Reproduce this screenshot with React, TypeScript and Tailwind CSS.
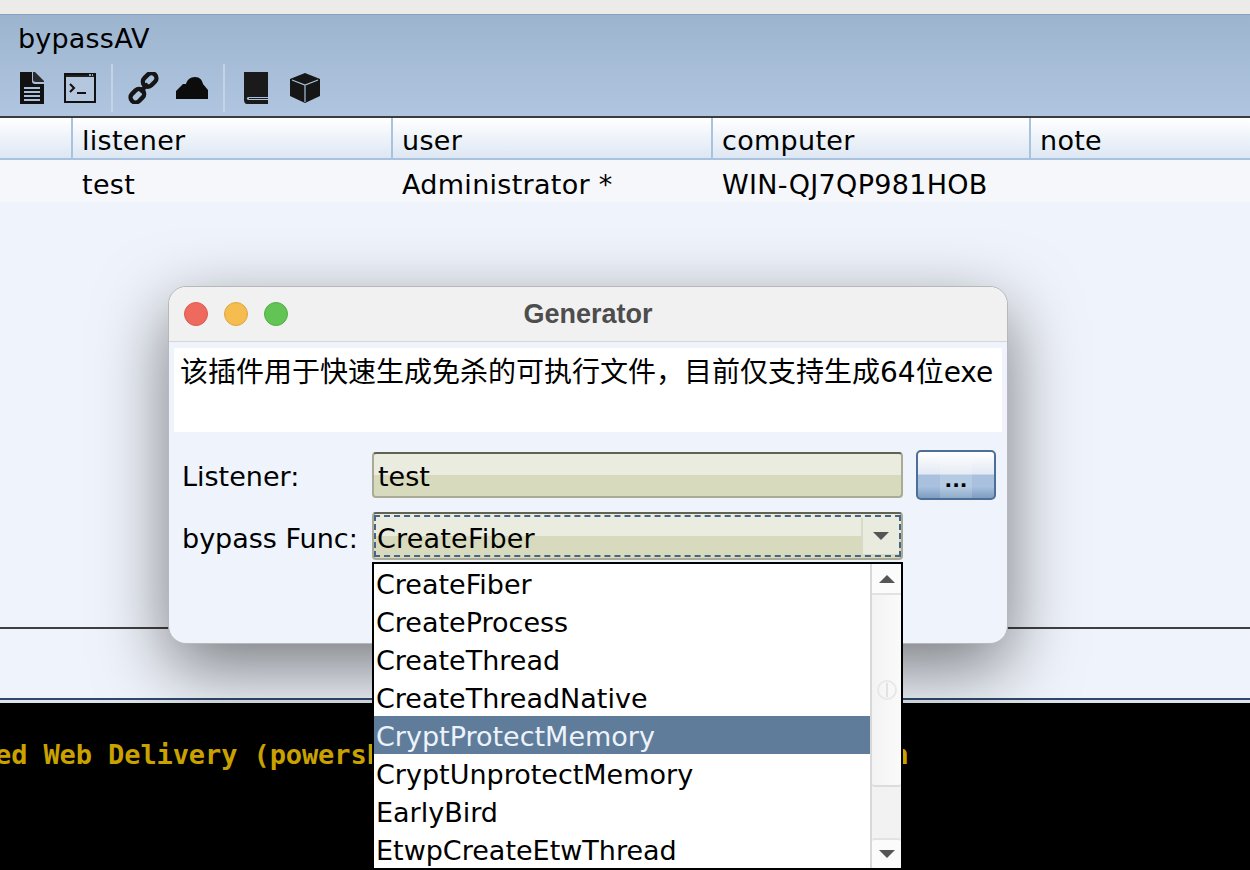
import { ReactNode } from 'react'

const sans = 'font-["DejaVu_Sans","Noto_Sans_CJK_SC",sans-serif]'

const columns = [
  { name: '', value: '', width: 'w-[73px]' },
  { name: 'listener', value: 'test', width: 'w-[320px]' },
  { name: 'user', value: 'Administrator *', width: 'w-[320px]' },
  { name: 'computer', value: 'WIN-QJ7QP981HOB', width: 'w-[318px]' },
  { name: 'note', value: '', width: 'flex-1' },
]

const funcs = [
  'CreateFiber',
  'CreateProcess',
  'CreateThread',
  'CreateThreadNative',
  'CryptProtectMemory',
  'CryptUnprotectMemory',
  'EarlyBird',
  'EtwpCreateEtwThread',
]

function DocIcon() {
  return (
    <svg width="24" height="32" viewBox="0 0 24 32" className="ml-[20px]">
      <path d="M0 0H12V9C12 11 13 12 15 12H24V32H0Z" fill="#111" />
      <path d="M13 0H15L24 9V10H16C14 10 13 9 13 8Z" fill="#2a2a2a" />
      <path d="M4 16H20M4 20H20M4 24H20M4 28H20" stroke="#a9c0db" strokeWidth="2" />
    </svg>
  )
}

function TerminalIcon() {
  return (
    <svg width="32" height="30" viewBox="0 0 32 30" className="ml-[20px]">
      <rect x="1" y="1" width="30" height="28" fill="#b4c7df" stroke="#111" strokeWidth="2" />
      <rect x="2" y="2" width="28" height="2" fill="#222" />
      <path d="M25 2H27M28 2H29" stroke="#8fa6c2" strokeWidth="2" />
      <path d="M6 11L10 15L6 19" fill="none" stroke="#111" strokeWidth="2" />
      <path d="M13 20H22" stroke="#111" strokeWidth="2" />
    </svg>
  )
}

function LinkIcon() {
  return (
    <svg width="32" height="32" viewBox="0 0 32 32" className="ml-[15px]">
      <g fill="none" stroke="#151515" strokeWidth="4.4">
        <rect x="15" y="3" width="15" height="10" rx="5" transform="rotate(-45 22 9)" />
        <rect x="2" y="19" width="15" height="10" rx="5" transform="rotate(-45 9 24)" />
        <path d="M12 20L20 12" />
      </g>
    </svg>
  )
}

function CloudIcon() {
  return (
    <svg width="32" height="22" viewBox="0 0 32 22" className="ml-[16px]">
      <path d="M0 22V14L7 7H10C11 3 14 0 19 0C24 0 26 3 27 7L32 13V22Z" fill="#0c0c0c" />
    </svg>
  )
}

function BookIcon() {
  return (
    <svg width="24" height="32" viewBox="0 0 24 32" className="ml-[19px]">
      <path d="M0 0H24V25H5C2 25 2 28 5 28H24V32H3C1 32 0 30 0 28Z" fill="#1a1a1a" />
      <path d="M5 26.5H24" stroke="#1a1a1a" strokeWidth="1" />
    </svg>
  )
}

function CubeIcon() {
  return (
    <svg width="30" height="30" viewBox="0 0 30 30" className="ml-[22px]">
      <path d="M15 0L30 6V23L15 30L0 23V6Z" fill="#161616" />
      <path d="M2 7L15 12L28 7M15 12V29" fill="none" stroke="#a8bfdb" strokeWidth="1.2" />
    </svg>
  )
}

function ToolbarSep() {
  return <div className="ml-[15px] h-[48px] w-[2px] self-center bg-[#c4d3e6]" />
}

function FieldBg({ children, className }: { children: ReactNode; className?: string }) {
  return (
    <div
      className={`relative flex items-center rounded-[4px] border-2 border-[#a9ab95] border-t-[#5f6350] bg-[linear-gradient(#eaecdf_0%,#eaecdf_50%,#d7dabd_50%,#d7dabd_100%)] ${className ?? ''}`}
    >
      {children}
    </div>
  )
}

function Caret({ up }: { up?: boolean }) {
  return (
    <svg width="16" height="8" viewBox="0 0 16 8">
      <path d={up ? 'M0 8H16L8 0Z' : 'M0 0H16L8 8Z'} fill="#555" />
    </svg>
  )
}

function ComboList() {
  return (
    <div className="absolute left-[-2px] top-[calc(100%+4px)] flex h-[308px] w-[531px] overflow-hidden border-2 border-black bg-white">
      <div className="flex w-[496px] flex-col">
        {funcs.map((f, i) => (
          <div
            key={f}
            className={`h-[38px] shrink-0 pl-[2px] text-[27px] leading-[42px] ${i === 4 ? 'bg-[#5f7d9b] text-[#eef3fb]' : 'text-black'}`}
          >
            {f}
          </div>
        ))}
      </div>
      <div className="flex w-[31px] flex-col border-l-2 border-[#d8d8d8] bg-[#f2f2f2]">
        <div className="flex h-[31px] items-center justify-center border-b-2 border-[#e2e2e2] bg-[#fbfbfb]">
          <Caret up />
        </div>
        <div className="relative flex h-[192px] items-center justify-center rounded-b-[3px] border-b-2 border-[#dcdcdc] bg-[linear-gradient(90deg,#f3f3f3,#fafafa)]">
          <div className="flex h-[20px] w-[20px] items-center justify-center rounded-full border-2 border-[#e8e8e8]">
            <div className="h-[14px] w-[2px] bg-[#e2e2e2]" />
          </div>
        </div>
        <div className="flex-1" />
        <div className="flex h-[30px] items-center justify-center rounded-[3px] border-t-2 border-[#e2e2e2] bg-[#fbfbfb]">
          <Caret />
        </div>
      </div>
    </div>
  )
}

function Generator() {
  return (
    <div className="absolute left-[168px] top-[286px] h-[358px] w-[840px] rounded-[18px] border border-[#b8b8ba] bg-[#eff3fb] shadow-[0_24px_70px_rgba(0,0,0,0.5)]">
      <div className="relative flex h-[55px] items-center justify-center rounded-t-[18px] border-b border-[#d6d6d6] bg-[#f1f1f1]">
        <div className="absolute left-[15px] top-[15px] flex gap-[16px]">
          <div className="h-[24px] w-[24px] rounded-full border border-[#dc5a50] bg-[#ee6a5f]" />
          <div className="h-[24px] w-[24px] rounded-full border border-[#dda73f] bg-[#f5bd4f]" />
          <div className="h-[24px] w-[24px] rounded-full border border-[#52ad47] bg-[#61c454]" />
        </div>
        <span className='font-["Liberation_Sans",sans-serif] text-[27px] font-bold leading-[52px] text-[#4d4d4d]'>Generator</span>
      </div>
      <div className="mx-[5px] mt-[6px] h-[84px] bg-white pl-[6px] pt-[6px] text-[28px] leading-[38px] text-black">
        该插件用于快速生成免杀的可执行文件，目前仅支持生成64位exe
      </div>
      <div className="mt-[18px] flex items-center pl-[13px]">
        <div className="w-[190px] pt-[4px] text-[27px] text-black">Listener:</div>
        <FieldBg className="h-[46px] w-[531px] pl-[4px] pt-[4px] text-[27px] text-black">test</FieldBg>
        <div className="ml-[13px] flex h-[50px] w-[80px] justify-center rounded-[5px] border-2 border-[#4b6f96] bg-[linear-gradient(#ffffff_0%,#e2e9f3_48%,#a9c1de_50%,#a9c1de_75%,#7d9dc1_100%)]">
          <div className="flex w-[32px] items-end justify-center bg-white/15 pb-[8px] text-[20px] font-bold leading-none text-black">
            ...
          </div>
        </div>
      </div>
      <div className="mt-[12px] flex items-center pl-[13px]">
        <div className="w-[190px] pt-[6px] text-[27px] text-black">bypass Func:</div>
        <FieldBg className="h-[48px] w-[531px] text-[27px] text-black">
          <div className="flex h-[42px] w-full items-center justify-between border-2 border-dashed border-[#46648a] pl-[1px]">
            <span className="pt-[7px] tracking-[0.2px]">CreateFiber</span>
            <div className="flex h-[36px] w-[38px] items-center justify-center border-l-2 border-[#d8dac8] bg-[#e9ebdf]">
              <Caret />
            </div>
          </div>
          <ComboList />
        </FieldBg>
      </div>
    </div>
  )
}

export default function App() {
  return (
    <div className={`relative flex h-[870px] w-[1250px] flex-col overflow-hidden bg-[#eff3fb] ${sans}`}>
      <div className="h-[14px] bg-[#ecebe9]" />
      <div className="h-[102px] border-t border-[#86a0bf] bg-[linear-gradient(#9db4cf,#b0c6e0)]">
        <div className="pl-[18px] pt-[7px] text-[27px] leading-[34px] tracking-[0.2px] text-black">bypassAV</div>
        <div className="mt-[8px] flex h-[48px] items-center">
          <DocIcon />
          <TerminalIcon />
          <ToolbarSep />
          <LinkIcon />
          <CloudIcon />
          <ToolbarSep />
          <BookIcon />
          <CubeIcon />
        </div>
      </div>
      <div className="flex h-[44px] border-t-2 border-b-2 border-t-[#3c3c3c] border-b-[#a9c2dd] bg-[linear-gradient(#ffffff,#dde7f3)]">
        {columns.map((c, i) => (
          <div
            key={i}
            className={`${c.width} border-r-2 border-[#a9c2dd] pl-[9px] text-[27px] leading-[46px] tracking-[0.3px] text-black last:border-r-0`}
          >
            {c.name}
          </div>
        ))}
      </div>
      <div className="flex h-[42px] bg-[#f6f7fa]">
        {columns.map((c, i) => (
          <div key={i} className={`${c.width} pl-[9px] text-[27px] leading-[50px] tracking-[0.3px] text-black`}>
            {c.value}
          </div>
        ))}
      </div>
      <div className="h-[425px]" />
      <div className="h-[2px] bg-[#404040]" />
      <div className="h-[69px]" />
      <div className="h-[2px] bg-[#2f4a68]" />
      <div className="h-[3px] bg-[#dfe3ec]" />
      <div className="flex-1 overflow-hidden bg-black pt-[33px]">
        <pre className='ml-[-5px] font-["DejaVu_Sans_Mono",monospace] text-[27px] font-bold leading-[38px] tracking-[-0.1px] text-[#c9a200]'>
          {'ed Web Delivery (powersh                               '}
          <span className="ml-[9px]">n</span>
        </pre>
      </div>
      <Generator />
    </div>
  )
}
